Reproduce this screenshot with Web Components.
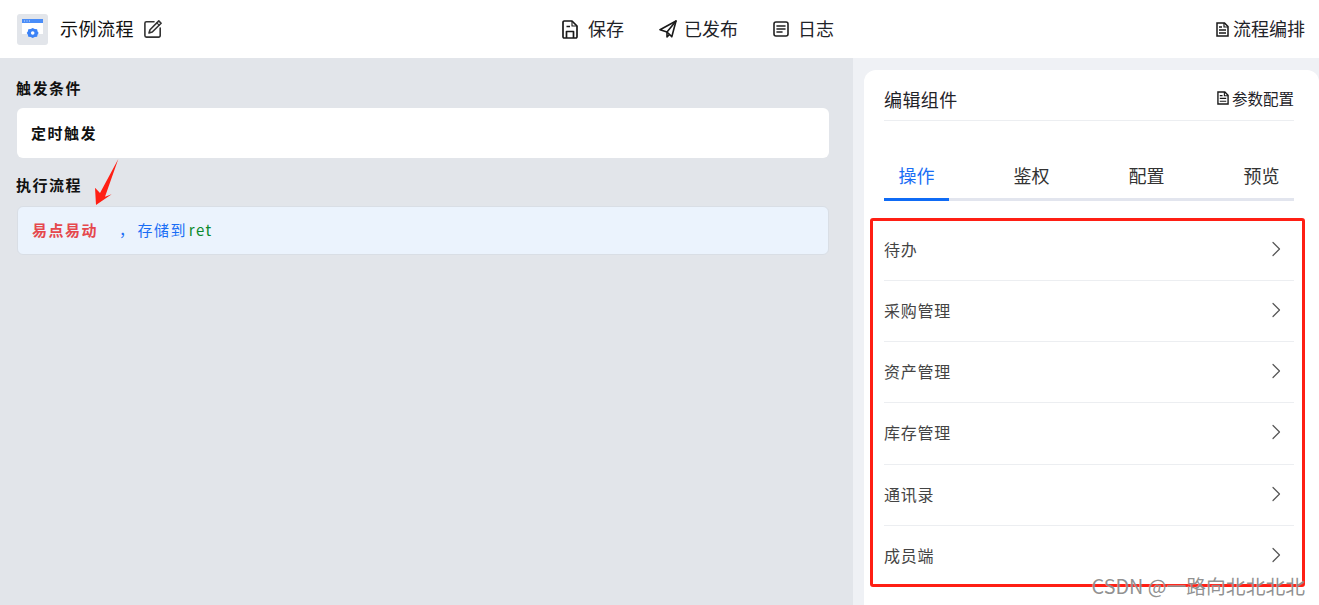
<!DOCTYPE html>
<html lang="zh-CN">
<head>
<meta charset="utf-8">
<title>示例流程</title>
<style>
  html, body {
    margin: 0;
    height: 100%;
    overflow: hidden;
    font-family: "Noto Sans CJK SC", "Liberation Sans", sans-serif;
    color: #1f2329;
  }
</style>
</head>
<body>
<flow-page></flow-page>

<script>
const ICONS = {
  edit: `<svg viewBox="0 0 18 18" width="18" height="18" fill="none" stroke="#333" stroke-width="1.6" stroke-linejoin="round" stroke-linecap="round"><path d="M10 1.800H2.400A1.500 1.500 0 0 0 .9 3.300V15.600A1.500 1.500 0 0 0 2.400 17.100H14.700A1.500 1.500 0 0 0 16.200 15.600V8"/><path d="M14.800.9l2.300 2.300-8.800 8.800-3.300 1 1-3.300z"/><path d="M12.800 2.900l2.300 2.300" stroke-width="1.200"/></svg>`,
  save: `<svg viewBox="0 0 16 19" width="16" height="19" fill="none" stroke="#1a1a1a" stroke-width="1.7" stroke-linejoin="round"><path d="M1 2.200A1.200 1.200 0 0 1 2.200 1H10l5 5v10.800A1.200 1.200 0 0 1 13.800 18H2.200A1.200 1.200 0 0 1 1 16.800z"/><path d="M10 1v5h5" stroke-width="1.100"/><path d="M4.500 6.500h3.500" stroke-width="1.500"/><path d="M4.500 18v-6.500h7V18" stroke-width="1.700"/></svg>`,
  send: `<svg viewBox="0 0 18 18" width="18" height="18" fill="none" stroke="#1a1a1a" stroke-width="1.6" stroke-linejoin="round" stroke-linecap="round"><path d="M17 1 1 9.700l7 2.300 4.800 4.800z"/><path d="M17 1 8 12v5l2.500-2.500"/></svg>`,
  log: `<svg viewBox="0 0 16 16" width="16" height="16" fill="none" stroke="#222" stroke-width="1.6" stroke-linecap="round"><rect x="1" y="1" width="14" height="14" rx="2"/><path d="M4 5h8M4 8h8M4 11h5"/></svg>`,
  file: `<svg viewBox="0 0 13 15" width="13" height="15" fill="none" stroke="#1a1a1a" stroke-width="1.5" stroke-linejoin="miter"><path d="M1 1h7.500L12 4.500V14H1z"/><path d="M8 1v4h4" stroke-width="1.200"/><path d="M3 5h3M3 8h7M3 11h7" stroke-width="1.300"/></svg>`,
  chevron: `<svg viewBox="0 0 10 16" width="10" height="16" fill="none" stroke="#555" stroke-width="1.2" stroke-linecap="round" stroke-linejoin="round"><path d="M2 1.500 8.500 8 2 14.500"/></svg>`,
  logo: `<svg viewBox="0 0 31 31" width="31" height="31"><rect width="31" height="31" rx="3" fill="#e2e5ea"/><rect x="5" y="5" width="21" height="15" fill="#fff"/><rect x="5" y="5" width="21" height="4" fill="#4a8df8"/><path d="M7 7h1M9.500 7h1M12 7h1" stroke="#cfe0fd" stroke-width="1"/><path d="M15.700 14l2 1.100 2.400.1.500 2.300 1.100 1.500-1.100 1.500-.5 2.300-2.400.1-2 1.100-2-1.100-2.400-.1-.5-2.300-1.100-1.500 1.100-1.500.5-2.300 2.400-.1z" fill="#3b82f6"/><circle cx="15.700" cy="19" r="1.800" fill="#fff"/></svg>`
};

class HeaderAction extends HTMLElement {
  constructor() {
    super();
    this.attachShadow({mode: 'open'});
    this.shadowRoot.innerHTML = `
      <style>
        :host {
          display: inline-flex;
          align-items: center;
          gap: var(--action-gap, 10px);
          font-size: 18px;
          line-height: 26px;
          color: #1f2329;
          white-space: nowrap;
        }
        svg { display: block; }
        .label { position: relative; top: -1px; }
      </style>
      ${ICONS[this.getAttribute('icon')] || ''}
      <span class="label"><slot></slot></span>
    `;
  }
}

class AppHeader extends HTMLElement {
  constructor() {
    super();
    this.attachShadow({mode: 'open'});
    this.shadowRoot.innerHTML = `
      <style>
        :host {
          display: flex;
          align-items: center;
          height: 58px;
          flex: none;
          padding: 0 14px 0 17px;
          background: #fff;
        }
        .left {
          width: 545px;
          display: flex;
          align-items: center;
        }
        .left svg { display: block; }
        .title {
          margin: -3px 10px 0 12px;
          font-size: 18px;
          line-height: 26px;
          font-weight: 400;
          letter-spacing: .5px;
          color: #111;
        }
        .center {
          display: flex;
          align-items: center;
          gap: 35px;
        }
        .right { margin-left: auto; --action-gap: 4px; }
      </style>
      <div class="left">
        ${ICONS.logo}
        <h1 class="title">示例流程</h1>
        ${ICONS.edit}
      </div>
      <div class="center">
        <header-action icon="save">保存</header-action>
        <header-action icon="send" style="--action-gap: 7px">已发布</header-action>
        <header-action icon="log" style="--action-gap: 9px">日志</header-action>
      </div>
      <div class="right"><header-action icon="file">流程编排</header-action></div>
    `;
  }
}

class FlowSection extends HTMLElement {
  constructor() {
    super();
    this.attachShadow({mode: 'open'});
    this.shadowRoot.innerHTML = `
      <style>
        :host { display: block; }
        h2 {
          margin: 0 0 var(--head-gap, 11px) -1px;
          font-size: 15px;
          line-height: 18px;
          letter-spacing: 1.5px;
          font-weight: 700;
          color: #111;
        }
        .card {
          box-sizing: border-box;
          display: flex;
          align-items: center;
          height: var(--card-height, 50px);
          padding: 0 14px 2px;
          border-radius: 6px;
          background: var(--card-bg, #fff);
          border: var(--card-border, 0);
          font-size: 15px;
          letter-spacing: 1.5px;
        }
      </style>
      <h2>${this.getAttribute('heading')}</h2>
      <div class="card"><slot></slot></div>
    `;
  }
}

class FlowCanvas extends HTMLElement {
  constructor() {
    super();
    this.attachShadow({mode: 'open'});
    this.shadowRoot.innerHTML = `
      <style>
        :host {
          display: flex;
          flex-direction: column;
          gap: 18px;
          box-sizing: border-box;
          width: 853px;
          flex: none;
          padding: 21px 24px 0 17px;
          background: #e2e5ea;
        }
        flow-section:first-child { --head-gap: 10px; }
        b { color: #111; }
        .step { color: #e5484d; font-weight: 700; }
        .text { color: #1a6ef5; margin-left: 21px; word-spacing: -3px; }
        .var { color: #0b8a2e; }
      </style>
      <flow-section heading="触发条件"><b>定时触发</b></flow-section>
      <flow-section heading="执行流程" style="--card-bg: #ebf3fd; --card-border: 1px solid #d9dee5; --card-height: 49px; --head-gap: 12px;">
        <span class="step">易点易动</span><span class="text">， 存储到 <span class="var">ret</span></span>
      </flow-section>
    `;
  }
}

class TabBar extends HTMLElement {
  constructor() {
    super();
    this.attachShadow({mode: 'open'});
    const tabs = this.getAttribute('tabs').split(',');
    this.shadowRoot.innerHTML = `
      <style>
        :host {
          display: flex;
          justify-content: space-between;
          margin-top: 41px;
          border-bottom: 3px solid #e2e5ee;
        }
        .tab {
          width: 65px;
          margin-bottom: -3px;
          padding-bottom: 10px;
          border-bottom: 3px solid transparent;
          text-align: center;
          font-size: 18px;
          line-height: 26px;
          color: #333;
        }
        .active { color: #1a6ef5; border-bottom-color: #0f6bf5; }
      </style>
      ${tabs.map((t, i) => `<div class="tab${i === 0 ? ' active' : ''}">${t}</div>`).join('')}
    `;
  }
}

class MenuRow extends HTMLElement {
  constructor() {
    super();
    this.attachShadow({mode: 'open'});
    this.shadowRoot.innerHTML = `
      <style>
        :host {
          display: flex;
          align-items: center;
          justify-content: space-between;
          box-sizing: border-box;
          height: 61.2px;
          padding-right: 13px;
          border-bottom: 1px solid #eceef1;
          font-size: 16px;
          letter-spacing: .75px;
          color: #444;
        }
        :host(:last-child) { border-bottom-color: transparent; }
        svg { display: block; margin-top: -2px; }
        .label { position: relative; top: -1px; }
      </style>
      <span class="label"><slot></slot></span>
      ${ICONS.chevron}
    `;
  }
}

class PanelLink extends HTMLElement {
  constructor() {
    super();
    this.attachShadow({mode: 'open'});
    this.shadowRoot.innerHTML = `
      <style>
        :host {
          display: inline-flex;
          align-items: center;
          gap: 3px;
          font-size: 15.5px;
          line-height: 22px;
          color: #1f2329;
          margin-top: -7px;
        }
        svg { display: block; width: 12px; height: 14px; }
      </style>
      ${ICONS.file}
      <slot></slot>
    `;
  }
}

class EditPanel extends HTMLElement {
  constructor() {
    super();
    this.attachShadow({mode: 'open'});
    this.shadowRoot.innerHTML = `
      <style>
        :host {
          display: block;
          flex: 1;
          min-width: 0;
          padding: 12px 0 0 11px;
          background: #eff1f5;
        }
        .panel {
          box-sizing: border-box;
          height: 100%;
          padding: 12px 25px 0 20px;
          background: #fff;
          border-radius: 12px 12px 0 0;
        }
        .head {
          display: flex;
          align-items: center;
          justify-content: space-between;
          height: 38px;
          border-bottom: 1px solid #eceef1;
        }
        h2 {
          margin: -4px 0 0;
          font-size: 18px;
          line-height: 26px;
          letter-spacing: .4px;
          font-weight: 400;
          color: #1f2329;
        }
        .menu { margin-top: 18.8px; }
      </style>
      <div class="panel">
        <div class="head">
          <h2>编辑组件</h2>
          <panel-link>参数配置</panel-link>
        </div>
        <tab-bar tabs="操作,鉴权,配置,预览"></tab-bar>
        <div class="menu"><slot></slot></div>
      </div>
    `;
  }
}

class MarkupLayer extends HTMLElement {
  constructor() {
    super();
    this.attachShadow({mode: 'open'});
    this.shadowRoot.innerHTML = `
      <style>
        :host {
          position: absolute;
          inset: 0;
          pointer-events: none;
        }
        .box {
          position: absolute;
          left: 870px;
          top: 218px;
          width: 435px;
          height: 369px;
          box-sizing: border-box;
          border: 3px solid #ff1f14;
          border-radius: 3px;
        }
        .arrow {
          position: absolute;
          left: 94px;
          top: 158px;
        }
        .mark {
          position: absolute;
          right: 14px;
          bottom: 7px;
          font-size: 19.8px;
          line-height: 24px;
          color: rgba(125, 125, 125, .85);
          text-shadow: 0 0 1px rgba(255, 255, 255, .8);
          white-space: nowrap;
        }
      </style>
      <div class="box"></div>
      <svg class="arrow" width="28" height="50" viewBox="0 0 28 50"><path d="M24.300 1 11 38.700l6.700-2.400L2 47 1 29.700 6 35z" fill="#ff1f14"/></svg>
      <div class="mark">CSDN @一路向北北北北</div>
    `;
  }
}

class FlowPage extends HTMLElement {
  constructor() {
    super();
    this.attachShadow({mode: 'open'});
    this.shadowRoot.innerHTML = `
      <style>
        :host {
          position: relative;
          display: flex;
          flex-direction: column;
          height: 605px;
          overflow: hidden;
        }
        main {
          display: flex;
          flex: 1;
          min-height: 0;
        }
      </style>
      <app-header></app-header>
      <main>
        <flow-canvas></flow-canvas>
        <edit-panel>
          <menu-row>待办</menu-row>
          <menu-row>采购管理</menu-row>
          <menu-row>资产管理</menu-row>
          <menu-row>库存管理</menu-row>
          <menu-row>通讯录</menu-row>
          <menu-row>成员端</menu-row>
        </edit-panel>
      </main>
      <markup-layer></markup-layer>
    `;
  }
}

customElements.define('header-action', HeaderAction);
customElements.define('app-header', AppHeader);
customElements.define('flow-section', FlowSection);
customElements.define('flow-canvas', FlowCanvas);
customElements.define('tab-bar', TabBar);
customElements.define('menu-row', MenuRow);
customElements.define('panel-link', PanelLink);
customElements.define('edit-panel', EditPanel);
customElements.define('markup-layer', MarkupLayer);
customElements.define('flow-page', FlowPage);
</script>
</body>
</html>
